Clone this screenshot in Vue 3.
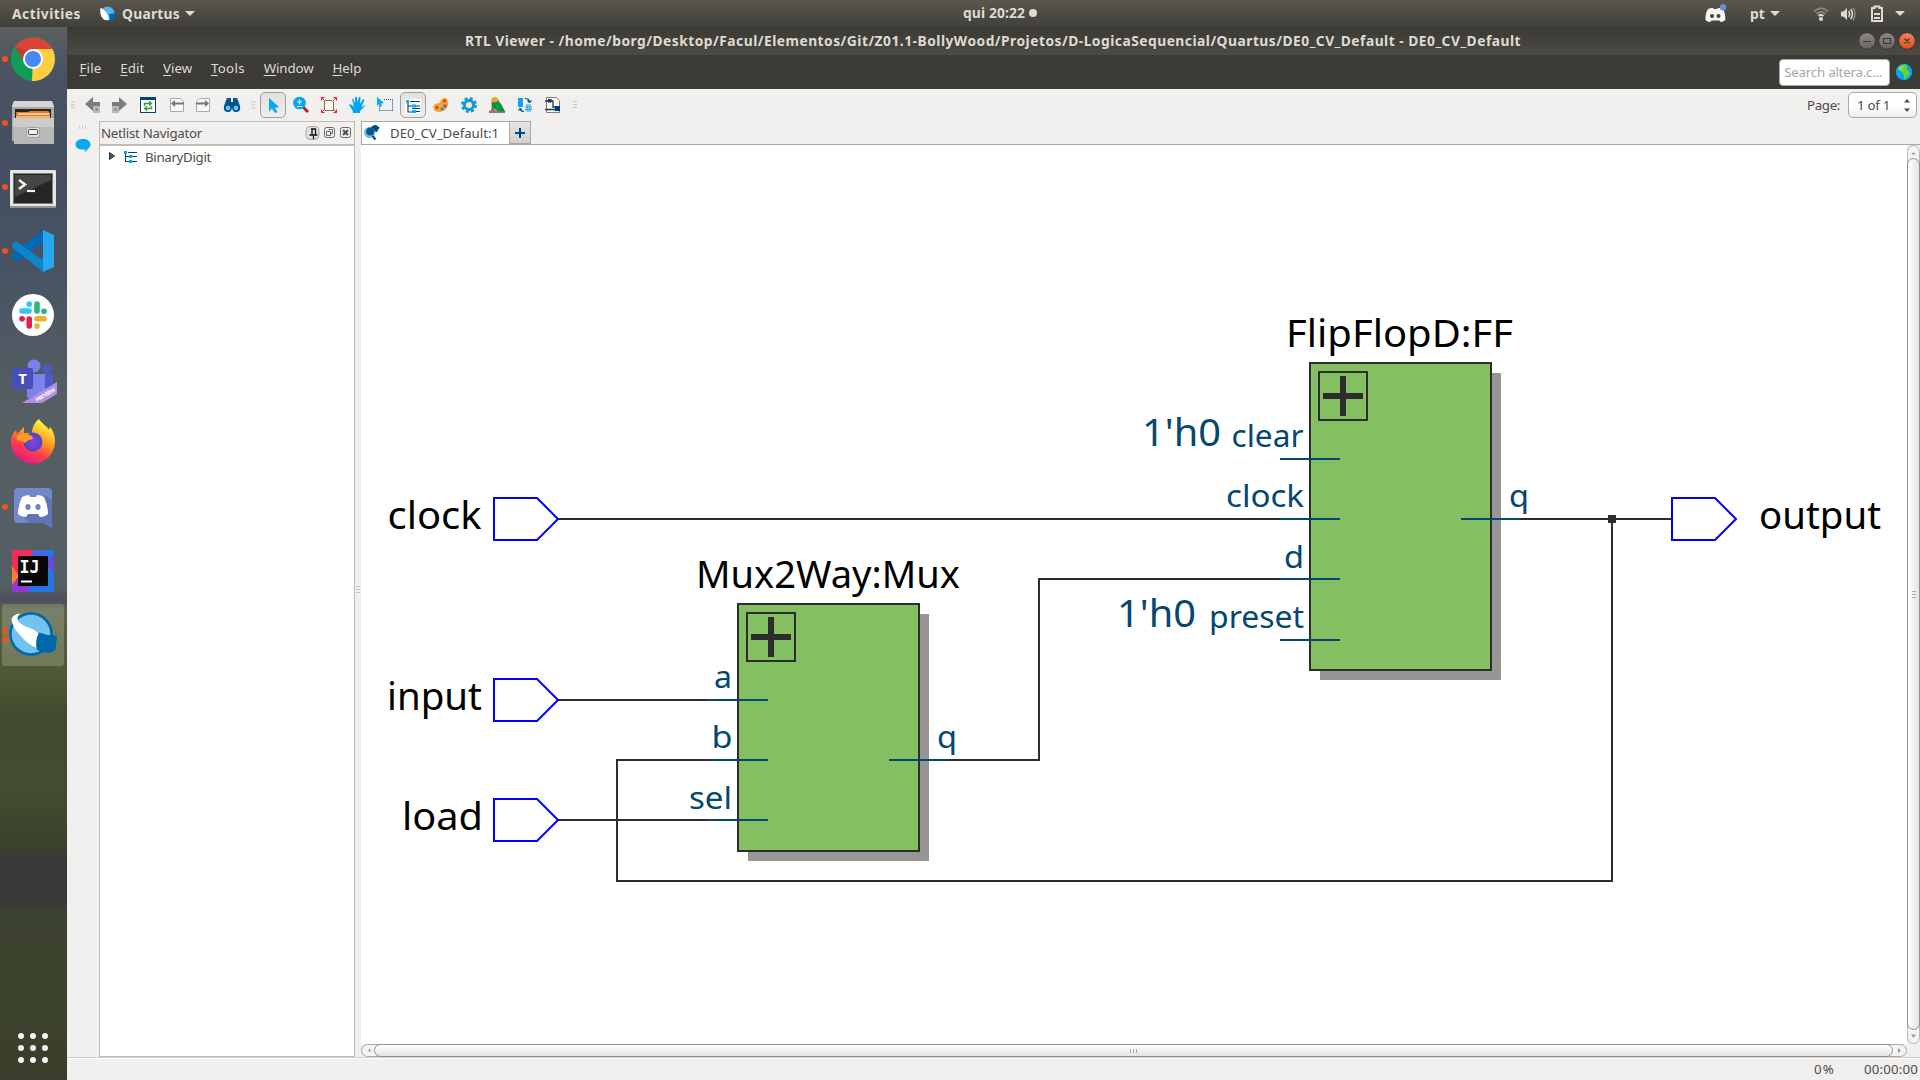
<script setup>
// Spreads a label's letters so that it takes the given width in pixels.
const vFit = {
  mounted(el, { value }) {
    const n = el.textContent.trim().length
    el.style.letterSpacing = (value - el.getBoundingClientRect().width) / n + 'px'
  },
}

const menus = [
  ['File', 22], ['Edit', 24], ['View', 29], ['Tools', 34], ['Window', 50], ['Help', 29],
]

const ports = [
  { label: 'clock', tx: 387.5, tw: 94, x: 494, y: 519 },
  { label: 'input', tx: 387, tw: 95, x: 494, y: 700 },
  { label: 'load', tx: 402, tw: 81, x: 494, y: 820 },
  { label: 'output', tx: 1759, tw: 122, x: 1672, y: 519 },
]

const blocks = [
  { name: 'Mux2Way:Mux', tx: 696, tw: 264, ty: 588, x: 738, y: 604, w: 181, h: 247 },
  { name: 'FlipFlopD:FF', tx: 1286, tw: 227, ty: 347, x: 1310, y: 363, w: 181, h: 307 },
]

const wires = [
  'M558 519H1280', 'M558 700H708', 'M558 820H708',
  'M949 760H1039V579H1280', 'M1521 519H1672', 'M1612 519V881H617V760H708',
]

const pins = [
  [708, 700], [708, 760], [708, 820], [889, 760],
  [1280, 459], [1280, 519], [1280, 579], [1280, 640], [1461, 519],
]

const pinLabels = [
  ['a', 714, 688, 18], ['b', 711.5, 748, 21], ['sel', 689, 808.5, 43], ['q', 937, 748, 20],
  ['clear', 1231.5, 446.5, 72], ['clock', 1226, 507, 78], ['d', 1284, 567.5, 20],
  ['preset', 1209, 627.5, 95], ['q', 1509, 507, 20],
]
const constants = [[1142, 446], [1117, 627]]
const grid = [-12, 0, 12]
</script>

<template>
  <div class="screen">
    <header class="topbar">
      <span class="activities"><b v-fit="69">Activities</b></span>
      <svg class="app-logo" width="17" height="16" viewBox="0 0 17 16">
        <circle cx="7.5" cy="7.5" r="7" fill="#56b4ea" />
        <path d="M.5 2C4 3 9 8 9 14l-4 0C1 12-.5 6 .5 2z" fill="#fff" />
        <path d="M9 8l7-1-1 6-5 2z" fill="#0068ab" />
      </svg>
      <b class="appname" v-fit="58">Quartus</b>
      <i class="caret"></i>
      <div class="clock"><b v-fit="62">qui 20:22</b><i class="dot"></i></div>
      <div class="tray">
        <svg width="24" height="20" viewBox="0 0 24 20">
          <path d="M4 5Q7 3.500 9 4l.6 1h3.500l.9-1q3-.2 5 1 2.500 4 2.300 11-2 2-4.800 2l-1-1.600H7.500L6.400 18Q3 18 1.500 16 1 10 4 5z" fill="#f4f4f4" />
          <circle cx="8" cy="12" r="2" fill="#45443f" /><circle cx="14.500" cy="12" r="2" fill="#45443f" />
          <circle cx="19" cy="3.300" r="3.200" fill="#7289da" />
        </svg>
        <b class="lang" v-fit="15">pt</b>
        <i class="caret"></i>
        <svg class="wifi" width="16" height="16" viewBox="0 0 16 16" fill="none" stroke-width="2">
          <path d="M1 5.500Q8-1 15 5.500M3.500 8Q8 4 12.500 8" stroke="#85837d" />
          <path d="M5.500 10Q8 8 10.500 10" stroke="#dfdbd2" /><circle cx="8" cy="13" r="2" fill="#dfdbd2" />
        </svg>
        <svg class="vol" width="16" height="16" viewBox="0 0 16 16" fill="none" stroke="#dfdbd2" stroke-width="1.500">
          <path d="M1 5.500h2.500L7 2v12L3.500 10.500H1z" fill="#dfdbd2" stroke="none" />
          <path d="M8.700 5q2 3 0 6M10.700 3q3.500 5 0 10" /><path d="M13 1.500q4 6.500 0 13" stroke="#85837d" />
        </svg>
        <svg class="bat" width="14" height="18" viewBox="0 0 14 18" fill="none" stroke="#dfdbd2">
          <path d="M2 3h2.500V1.500h5V3H12v13H2z" stroke-width="2" /><path d="M4 9h6M4 13h6" stroke-width="2" />
        </svg>
        <i class="caret last"></i>
      </div>
    </header>

    <div class="desktop">
      <nav class="dock">
        <!-- Chrome -->
        <svg viewBox="0 0 67 64">
          <circle cx="5" cy="32" r="3" fill="#e95420" />
          <circle cx="33" cy="32" r="22" fill="#109d58" />
          <path d="M33 32L32 54A22 22 0 0 0 52.500 22H33z" fill="#ffce42" />
          <path d="M15 20A22 22 0 0 1 52.500 22H33a10 10 0 0 0-10 11z" fill="#dc4437" />
          <path d="M15 20l8 13 6-9z" fill="#b6372e" opacity=".6" />
          <circle cx="33" cy="32" r="10" fill="#fff" /><circle cx="33" cy="32" r="8" fill="#4688f4" />
        </svg>
        <!-- Files -->
        <svg viewBox="0 0 67 64">
          <circle cx="5" cy="32" r="3" fill="#e95420" />
          <path d="M14 10h38l2 5v35H12V15z" fill="#a9a9a8" /><path d="M14 10h38l2 6H12z" fill="#d5d5d4" />
          <path d="M15 18h36v10H15z" fill="#27231f" />
          <path d="M16 21h12l2-1h18l2 2v6H16z" fill="#e77a22" /><path d="M18 23h31" stroke="#fff" stroke-width="1.200" />
          <path d="M16 26h34" stroke="#f7b567" stroke-width="2" />
          <path d="M13 27h41v26H14z" fill="#b9b9b8" /><path d="M13 27h41v9H13z" fill="#cbcbca" />
          <rect x="26.500" y="36.500" width="13" height="10" rx="2" fill="#ddd" stroke="#a0a0a0" />
          <rect x="28.500" y="38.500" width="9" height="5" rx="1" fill="#f0f0f0" stroke="#444" />
        </svg>
        <!-- Terminal -->
        <svg viewBox="0 0 67 64">
          <circle cx="5" cy="32" r="3" fill="#e95420" />
          <rect x="10" y="15" width="46" height="38" rx="1" fill="#e5e5e3" /><path d="M10 51h46v2H10z" fill="#929290" />
          <rect x="13.500" y="18.500" width="39" height="30" fill="#252525" stroke="#7d7d7b" />
          <path d="M15 20h36v5L15 42z" fill="#454545" />
          <path d="M19 25l6 4.500-6 4.500" fill="none" stroke="#f3f3f3" stroke-width="2.500" /><path d="M27 36h8" stroke="#f3f3f3" stroke-width="2.200" />
        </svg>
        <!-- VS Code -->
        <svg viewBox="0 0 67 64">
          <circle cx="5" cy="32" r="3" fill="#e95420" />
          <path d="M43 11v12L18 42l-3 0-3-4v-2z" fill="#0069b3" />
          <path d="M12 25l4-3L43 41v12L12 28z" fill="#0b86cd" />
          <path d="M43 11l11 5v32l-11 5z" fill="#27a8f2" />
        </svg>
        <!-- Slack -->
        <svg viewBox="0 0 67 64">
          <circle cx="33" cy="32" r="21" fill="#fff" />
          <g stroke-width="5.600" stroke-linecap="round">
            <path d="M22 28h7" stroke="#36c5f0" /><path d="M29.200 21v.2" stroke="#36c5f0" />
            <path d="M37 21v7" stroke="#2eb67d" /><path d="M44 28.200h.1" stroke="#2eb67d" />
            <path d="M37 35.700h7" stroke="#ecb22e" /><path d="M37 43v.1" stroke="#ecb22e" />
            <path d="M29.200 36v7" stroke="#e01e5a" /><path d="M22 35.800h.1" stroke="#e01e5a" />
          </g>
        </svg>
        <!-- Teams -->
        <svg viewBox="0 0 67 64">
          <circle cx="34" cy="19" r="6.500" fill="#7b83eb" /><circle cx="47" cy="22" r="4.500" fill="#5059c9" />
          <path d="M41 27h12v13q-4 10-12 5z" fill="#5059c9" />
          <path d="M26 27h19v19q-8 13-18 4z" fill="#7b83eb" />
          <rect x="12" y="21" width="21" height="21" rx="2" fill="#464eb8" />
          <text x="22.500" y="37" class="glyph" font-size="15" text-anchor="middle">T</text>
          <path d="M57 35v12L42 56H22z" fill="#b08fe0" />
          <text transform="translate(37 55) rotate(-31)" class="glyph" font-size="5.500" textLength="22">PREVIEW</text>
        </svg>
        <!-- Firefox -->
        <svg viewBox="0 0 67 64">
          <defs>
            <linearGradient id="fx" x1=".8" y1="0" x2=".3" y2="1"><stop offset=".1" stop-color="#fff23d" /><stop offset=".45" stop-color="#ff9420" /><stop offset=".7" stop-color="#ff3b4c" /><stop offset="1" stop-color="#e3168a" /></linearGradient>
            <radialGradient id="fp"><stop offset="0" stop-color="#8c3fe8" /><stop offset="1" stop-color="#4d45c0" /></radialGradient>
          </defs>
          <path d="M39 8c3 5 8 7 10 11l1-3c5 6 6 14 4 21A22 22 0 0 1 11 32c0-7 2-10 5-13l1 4 7-7v6l8 0c0-6 3-11 7-14z" fill="url(#fx)" />
          <circle cx="33" cy="31" r="9.500" fill="url(#fp)" />
          <path d="M17 25q7-4 15 0l1 3q-6 1-8 4-4-3-8-3z" fill="#ff9b24" />
        </svg>
        <!-- Discord -->
        <svg viewBox="0 0 67 64">
          <circle cx="5" cy="32" r="3" fill="#e95420" />
          <path d="M18 13h30q4 0 4 4v36l-9-5H18q-4 0-4-4V17q0-4 4-4z" fill="#7289c9" /><path d="M22 41l7 7h14l9 5V25L44 20z" fill="#6075b4" />
          <path d="M22 22q4-2 7-2l1 2h6l1-2q4 0 7 2 4 8 4 17-3 3-8 3l-2-3H28l-2 3q-5 0-8-3 0-9 4-17z" fill="#fff" />
          <ellipse cx="28" cy="32" rx="2.600" ry="2.900" fill="#6d83c4" /><ellipse cx="38" cy="32" rx="2.600" ry="2.900" fill="#6d83c4" />
        </svg>
        <!-- IntelliJ IDEA -->
        <svg viewBox="0 0 67 64">
          <path d="M12 11h42v42H12z" fill="#2474e4" /><path d="M12 11h20l6 14-20 28h-6z" fill="#f72a5c" />
          <path d="M32 11h12l10 14v6H36z" fill="#3b6ce4" /><path d="M12 27l7 10-7 9z" fill="#f98026" /><path d="M12 46l7-7 12 14H12z" fill="#9038cf" /><path d="M54 15v18l-8-8z" fill="#6747dc" />
          <path d="M18 17h30v30H18z" fill="#080808" />
          <text x="19.500" y="33.500" class="mono" font-size="17" textLength="20" lengthAdjust="spacingAndGlyphs">IJ</text><path d="M21 42.500h11" stroke="#fff" stroke-width="2" />
        </svg>
        <!-- Quartus -->
        <svg viewBox="0 0 67 64">
          <rect x="2" y="1" width="62" height="62" rx="3" fill="#fff" opacity=".19" />
          <circle cx="5" cy="28" r="3" fill="#e95420" /><circle cx="5" cy="36.500" r="3" fill="#e95420" />
          <circle cx="31" cy="31" r="20.500" fill="#74c3ee" stroke="#0068a8" stroke-width="2.500" />
          <path d="M21 10.500Q15 14 19 19Q23 23 30 25Q36 27 39 31L37 45Q28 42 20 32Q13 25 11.500 17Q12 11 21 10.500z" fill="#fff" />
          <path d="M39 29.500Q48 33 57 32.500L55.500 47L50 50Q43 50 37 47Q34.500 38 39 29.500z" fill="#0068a8" />
        </svg>
        <svg class="apps" viewBox="0 0 67 64">
          <template v-for="dy in grid" :key="dy"><circle v-for="dx in grid" :key="dx" :cx="33 + dx" :cy="32 + dy" r="3" fill="#f3f3f2" /></template>
        </svg>
      </nav>

      <main class="window">
        <div class="titlebar">
          <b v-fit="1056">RTL Viewer - /home/borg/Desktop/Facul/Elementos/Git/Z01.1-BollyWood/Projetos/D-LogicaSequencial/Quartus/DE0_CV_Default - DE0_CV_Default</b>
          <svg class="winbtns" width="60" height="20" viewBox="0 0 60 20">
            <defs>
              <linearGradient id="gb" x2="0" y2="1"><stop stop-color="#8d8b83" /><stop offset="1" stop-color="#66645d" /></linearGradient>
              <linearGradient id="ob" x2="0" y2="1"><stop stop-color="#f38363" /><stop offset="1" stop-color="#e14c1c" /></linearGradient>
            </defs>
            <g stroke="#33322e" stroke-width=".8"><circle cx="10" cy="10" r="8.300" fill="url(#gb)" /><circle cx="30" cy="10" r="8.300" fill="url(#gb)" /><circle cx="50" cy="10" r="8.300" fill="url(#ob)" /></g>
            <path d="M6 10.500h8M26.500 7.500h7v5h-7zM47.500 7.500l5 5M52.500 7.500l-5 5" fill="none" stroke="#3a3934" stroke-width="1.200" />
          </svg>
        </div>

        <div class="menubar">
          <span v-for="[m, w] in menus" :key="m" v-fit="w" class="menu"><u>{{ m[0] }}</u>{{ m.slice(1) }}</span>
          <div class="search"><span v-fit="98">Search altera.c...</span></div>
          <svg width="18" height="18" viewBox="0 0 18 18">
            <circle cx="9" cy="9" r="8.200" fill="#05a5f4" />
            <path d="M5 3l5-2 2 2 1 1-2 2 2 1 2 3-2 3-3 4-1-3-1-4-3-3z" fill="#63d333" /><path d="M3 5l3-2 4 1-3 2 1 3-4-2z" fill="#8ae33c" />
          </svg>
        </div>

        <div class="toolbar">
          <svg class="w13" viewBox="-6.500 -16 13 32"><path d="M-2.500-3h4M-2.500 0h4M-2.500 3h4" stroke="#c5c3c0" /></svg>
          <svg class="w26" viewBox="-13 -16 26 32"><path d="M-8-1L0-8v5h7V1H0v5z" fill="#7c7c7c" /><path d="M0 1h7v7H0z" fill="#b8b8b8" /><path d="M2.500 3.500h2v2h-2z" fill="#777" /></svg>
          <svg class="w26" viewBox="-13 -16 26 32"><path d="M8-1L0-8v5h-7V1h7v5z" fill="#7c7c7c" /><path d="M-7 1h7v7h-7z" fill="#b8b8b8" /><path d="M-4.500 3.500h2v2h-2z" fill="#777" /></svg>
          <svg class="w32" viewBox="-16 -16 32 32"><path d="M-8-8H8V8H-8z" fill="#00457c" /><path d="M-7-5H7V7H-7z" fill="#fff" /><path d="M-3.500 1v-2.500H2.500M3.500 1v2.500H-2.500" fill="none" stroke="#3e9c3a" stroke-width="1.500" /><path d="M1-4.500l3.500 3L1 1.500zM-1 .5l-3.500 3L-1 6.500z" fill="#3e9c3a" /></svg>
          <svg class="w26" viewBox="-13 -16 26 32"><path d="M-6.500-6.500h10l3 3v10h-13z" fill="#f8f8f8" stroke="#aaa" /><path d="M7-1.500H-3" stroke="#777" stroke-width="2" /><path d="M-6-1.500l4-3.500v7z" fill="#777" /></svg>
          <svg class="w26" viewBox="-13 -16 26 32"><path d="M6.500-6.500h-10l-3 3v10h13z" fill="#f8f8f8" stroke="#aaa" /><path d="M-7-1.500H3" stroke="#777" stroke-width="2" /><path d="M6-1.500l-4-3.500v7z" fill="#777" /></svg>
          <svg class="w32" viewBox="-16 -16 32 32"><path d="M-5-7h4v4h2v-4h4l3 8q1 6-4 6-4 0-4-5 0 5-4 5-5 0-4-6z" fill="#00568f" /><circle cx="-4" cy="3" r="2.200" fill="#77c6f2" /><circle cx="4" cy="3" r="2.200" fill="#77c6f2" /></svg>
          <svg class="w11" viewBox="-5.500 -16 11 32"><path d="M-2-3h4M-2 0h4M-2 3h4" stroke="#c5c3c0" /></svg>
          <div class="pressed"><svg viewBox="-14 -16 28 32"><path d="M-4-7L6 2 2 3l2.500 4-2.500 1-3-4.500-3 3z" fill="#05a9f7" /></svg></div>
          <svg class="w28" viewBox="-14 -16 28 32"><path d="M2 2l5 5" stroke="#ad1f22" stroke-width="2.800" /><circle cx="-1.500" cy="-2" r="6.300" fill="#05a3f0" /><path d="M-4-3h5M-1.500-5.500v5M-4 1.500h5" stroke="#fff" stroke-width="1.200" /></svg>
          <svg class="w28" viewBox="-14 -16 28 32"><path d="M-4.500-4.500H3L4.500-3v8.500h-9z" fill="#fff9df" stroke="#866e63" /><path d="M-7.500-4.500v-3h3M-7.500-7.500l3 3M7.500-4.500v-3h-3M7.500-7.500l-3 3M-7.500 4.500v3h3M-7.500 7.500l3-3M7.500 4.500v3h-3M7.500 7.500l-3-3" fill="none" stroke="#ed1c24" /></svg>
          <svg class="w28" viewBox="-14 -16 28 32"><path d="M-4 8C-4 4-7 3-8-1l3 1 2 2-2-8 1-.5 2 5V-8h2v6l2-6h1.500L3-1l3-5 1.500.5-3 8L8 0v1L3 6v2z" fill="#05a3f0" /></svg>
          <svg class="w28" viewBox="-14 -16 28 32"><path d="M-1-5.500H7.500M7.500-5.500v11M7.500 5.500h-13M-5.500 5.500V0" fill="none" stroke="#0b4e86" stroke-dasharray="1 1" /><path d="M-8-8L-1-2l-3 .5L-3 1-5 2-6-1l-2 2z" fill="#05a9f7" /></svg>
          <div class="pressed"><svg viewBox="-14 -16 28 32"><path d="M-8-6H8V9H-8z" fill="#fff" /><path d="M-5-2v9h4M-5 1h4M-3-3.500h10M3 1h4M3 6.500h4M-1 3.500h8" fill="none" stroke="#00457c" stroke-width="1.200" /><path d="M-7-5h3v3h-3zM-1-.5h4v3h-4zM-1 5h4v3h-4z" fill="#05a9f7" /></svg></div>
          <svg class="w28" viewBox="-14 -16 28 32"><path d="M0-5C2-8 7-8 7-3 8 3 3 7-2 7-7 7-9 3-7 0-5-3-1 0 0-5z" fill="#f6a72b" /><circle cx="3.500" cy="-4" r="1.700" fill="#ed3b3b" /><circle cx="4" cy="1" r="1.700" fill="#8e4dc4" /><circle cx="-4" cy="2.500" r="1.700" fill="#ed3b3b" /><circle cx="1" cy="4" r="1.600" fill="#1a8ddd" /></svg>
          <svg class="w28" viewBox="-14 -16 28 32"><circle r="6.500" fill="none" stroke="#0b98e0" stroke-width="3" stroke-dasharray="2.800 2.305" /><circle r="4.600" fill="#fbe4b4" stroke="#0b98e0" stroke-width="3" /></svg>
          <svg class="w28" viewBox="-14 -16 28 32"><path d="M-8 5.500H8V8H-8z" fill="#94776d" /><path d="M-5-1l-1 7h4z" fill="#a5683a" /><path d="M-5-4L1-6Q2-3 4-1L8 6.500H3Q-6 5-5.500-3z" fill="#0b8f43" /><path d="M-1-1q3 1 5 5-5-1-5-5z" fill="#14b04f" /><path d="M-6-5Q-5-8-2-8 1-8 1.500-4L-2-2.500-5-3z" fill="#f3a42b" /></svg>
          <svg class="w28" viewBox="-14 -16 28 32"><path d="M-7-7h5v9h-5z" fill="#05a9f7" /><path d="M1-1h5v8H1z" fill="#7acbf1" /><path d="M0-6.500q4 0 4.500 3M2.500-4.500l2 2 2-2M-1 6.500q-3 0-4-2.500M-6.500 5.500l1.500-2 2 1.500" fill="none" stroke="#0b4e86" stroke-width="1.100" /><path d="M0 2h7.500M0 4.500h7.500" stroke="#0b4e86" stroke-width=".8" stroke-dasharray="1 1" /></svg>
          <svg class="w28" viewBox="-14 -16 28 32"><path d="M-6.500-7.500h10l3 3v12h-13z" fill="#fff9e6" stroke="#94776d" /><path d="M-8-4h8v6h4M-8 4.500h10" fill="none" stroke="#003c70" stroke-width="1.300" /><path d="M-5-6h3.500v3.500H-5zM2 1h5v5H2z" fill="#003c70" /></svg>
          <svg class="w16" viewBox="-8 -16 16 32"><path d="M-2-3.500h4M-2-.5h4M-2 2.500h4" stroke="#c5c3c0" /></svg>
          <span class="page" v-fit="33">Page:</span>
          <div class="spin"><span v-fit="33">1 of 1</span><svg width="8" height="14" viewBox="0 0 8 14"><path d="M1 4.500l3-3.500 3 3.500zM1 10.500h6L4 14z" fill="#4c4c4c" /></svg></div>
        </div>

        <div class="work">
          <aside class="strip">
            <svg width="32" height="36" viewBox="0 0 32 36"><path d="M12.500 4v4M15.500 4v4M18.500 4v4" stroke="#cfcdca" /><path d="M16 18c4 0 7.500 2 7.500 5.500 0 2-1 3-2.500 4q-1 3-4 3l1.500-2C12 29 8.500 27 8.500 23.500S12 18 16 18z" fill="#05a9f7" /></svg>
          </aside>
          <section class="nav">
            <div class="navhead">
              <span v-fit="101">Netlist Navigator</span>
              <svg width="49" height="16" viewBox="0 0 49 16" fill="none">
                <rect x="1" y="1.500" width="13" height="13" rx="4" fill="#e3e1df" stroke="#a8a6a3" /><path d="M6 4h5M7 4v6M10.500 4v6M4.500 10h8M8.500 10v4" stroke="#111" stroke-width="1.300" />
                <g stroke="#696969"><rect x="19.500" y="2.500" width="10" height="10" rx="2" /><path d="M23.500 4.500h4v4h-2M21.500 6.500h4v4h-4z" /><rect x="35.500" y="2.500" width="10" height="10" rx="2" /></g>
                <path d="M38 5l5 5M43 5l-5 5" stroke="#555" stroke-width="2.200" />
              </svg>
            </div>
            <div class="tree">
              <svg width="37" height="16" viewBox="0 0 37 16"><path d="M1.500 3.500v7l5-3.500z" fill="#555" stroke="#333" /><path d="M17.500 4v8.500h4M17.500 7.500h4M20 3.500h9M24 7.500h5M24 12.500h5" fill="none" stroke="#00457c" stroke-width="1.100" /><path d="M16 2h3v3h-3zM21 6h3v3h-3zM21 11h3v3h-3z" fill="#05a3f0" /></svg>
              <span v-fit="66">BinaryDigit</span>
            </div>
          </section>
          <div class="splitter"><i></i></div>
          <section class="view">
            <div class="tabs">
              <div class="tab">
                <svg width="18" height="18" viewBox="0 0 18 18"><path d="M8 3.500Q9 1 13 1l3.500 2.500L14 8l-4-1z" fill="#00457c" /><circle cx="6.500" cy="8.500" r="5.500" fill="#69bfec" /><circle cx="7.300" cy="7.500" r="4" fill="#07568f" /><path d="M9.500 12l3 3.500" stroke="#00457c" stroke-width="2" /></svg>
                <span v-fit="109">DE0_CV_Default:1</span>
              </div>
              <div class="add"><svg width="10" height="10" viewBox="0 0 10 10"><path d="M5 0v10M0 5h10" stroke="#00457c" stroke-width="2" /></svg></div>
            </div>
            <div class="canvasrow">
              <svg class="schematic" viewBox="361 145 1546 899">
                <g fill="none" stroke="#2d2d2d" stroke-width="2"><path v-for="d in wires" :key="d" :d="d" /></g>
                <rect x="1608" y="515" width="8" height="8" fill="#2d2d2d" />
                <g v-for="b in blocks" :key="b.name">
                  <rect :x="b.x + 10" :y="b.y + 10" :width="b.w" :height="b.h" fill="#969696" />
                  <rect :x="b.x" :y="b.y" :width="b.w" :height="b.h" fill="#84c061" stroke="#2d2d2d" stroke-width="2" />
                  <rect :x="b.x + 9" :y="b.y + 9" width="48" height="48" fill="none" stroke="#2d2d2d" stroke-width="2" />
                  <path :d="`M${b.x + 13} ${b.y + 33}h40M${b.x + 33} ${b.y + 13}v40`" stroke="#2d2d2d" stroke-width="6" />
                  <text :x="b.tx" :y="b.ty" :textLength="b.tw" lengthAdjust="spacingAndGlyphs" font-size="38.500">{{ b.name }}</text>
                </g>
                <g v-for="p in ports" :key="p.label">
                  <path :d="`M${p.x} ${p.y - 21}h43l21 21l-21 21h-43z`" fill="none" stroke="#00f" stroke-width="2" />
                  <text :x="p.tx" :y="p.y + 9.5" :textLength="p.tw" lengthAdjust="spacingAndGlyphs" font-size="38.500">{{ p.label }}</text>
                </g>
                <g fill="#04476f">
                  <path v-for="[x, y] in pins" :key="x + '-' + y" :d="`M${x} ${y}h60`" stroke="#04476f" stroke-width="2" />
                  <text v-for="([t, x, y, w], i) in pinLabels" :key="i" :x="x" :y="y" :textLength="w" lengthAdjust="spacingAndGlyphs" font-size="31">{{ t }}</text>
                  <text v-for="[x, y] in constants" :key="y" :x="x" :y="y" textLength="79" lengthAdjust="spacingAndGlyphs" font-size="38.500">1'h0</text>
                </g>
              </svg>
              <div class="vscroll">
                <svg width="11" height="12" viewBox="0 0 11 12"><path d="M3.500 8.500l2-2.500 2 2.500z" fill="#9a9a9a" /></svg>
                <div class="vthumb"><i></i></div>
                <svg width="11" height="13" viewBox="0 0 11 13"><path d="M3 4.500h5L5.500 8z" fill="#9a9a9a" /></svg>
              </div>
            </div>
            <div class="hscroll">
              <svg width="12" height="11" viewBox="0 0 12 11"><path d="M8.500 3.500v4L6 5.500z" fill="#9a9a9a" /></svg>
              <div class="hthumb"><i></i></div>
              <svg width="13" height="11" viewBox="0 0 13 11"><path d="M5 3v5l3-2.500z" fill="#9a9a9a" /></svg>
            </div>
          </section>
        </div>

        <footer class="status"><span v-fit="21">0%</span><span v-fit="54">00:00:00</span></footer>
      </main>
    </div>
  </div>
</template>

<style>
body { margin: 0; overflow: hidden; }
</style>

<style scoped>
* { box-sizing: border-box; }
svg { display: block; flex: none; }
span, b { white-space: nowrap; flex: none; display: inline-block; }
.screen { width: 1920px; height: 1080px; display: flex; flex-direction: column; font: 13.3px/18px "Noto Sans", "Open Sans", sans-serif; color: #4c4c4c; overflow: hidden; }
.topbar { height: 27px; flex: none; display: flex; align-items: center; background: linear-gradient(#5a574e, #403f3a); color: #dfdbd2; font-size: 13.8px; position: relative; }
.activities { margin-left: 12px; width: 88px; }
.app-logo { margin-right: 5px; }
.caret { border: 5px solid transparent; border-top-color: #dfdbd2; border-bottom: 0; margin-left: 5px; flex: none; }
.clock { position: absolute; left: 963px; top: 4px; display: flex; align-items: center; }
.dot { width: 8px; height: 8px; border-radius: 50%; background: #dfdbd2; margin-left: 4px; }
.tray { margin-left: auto; display: flex; align-items: center; padding-right: 15px; }
.lang { margin-left: 22px; }
.wifi { margin-left: 33px; }
.vol { margin-left: 11px; }
.bat { margin-left: 14px; }
.caret.last { margin-left: 11px; }
.desktop { flex: 1; min-height: 0; display: flex; }
.dock { width: 67px; flex: none; display: flex; flex-direction: column; background: linear-gradient(#5d6061, #4a5362 45px, #434e60 150px, #4a5563 260px, #555e63 380px, #555e62 560px, #4b505b 572px, #5a6342 584px, #4f5835 645px, #414a2c 690px, #444d2f 760px, #3a422c 815px, #3a3838 832px, #393739 875px, #3c4230 885px, #3c432d 980px, #393d2b); }
.dock svg { width: 67px; height: 64px; }
.glyph { fill: #fff; font-family: "Noto Sans", sans-serif; font-weight: 700; }
.mono { fill: #fff; font-family: "DejaVu Sans Mono", monospace; font-weight: 700; }
.dock .apps { margin-top: 349px; }
.window { flex: 1; min-width: 0; display: flex; flex-direction: column; background: #f1f0ee; }
.titlebar { height: 28px; flex: none; background: linear-gradient(#3a3935, #4b4a43); color: #dfdbd2; display: flex; align-items: center; padding: 0 3px 1px 398px; font-size: 13.8px; }
.winbtns { margin-left: auto; }
.menubar { height: 34px; flex: none; background: #3c3b37; display: flex; align-items: center; gap: 18.8px; padding: 0 7px 0 12.500px; color: #dfdbd2; }
.menu { padding-bottom: 8px; }
.menu u { text-underline-offset: 2px; text-decoration-thickness: 1px; }
.search { margin: 0 -13px 0 auto; width: 111px; height: 27px; background: #fff; border: 1px solid #aaa69f; border-radius: 4px; color: #a6a6a6; padding: 3px 0 0 4px; position: relative; left: 1px; }
.toolbar { height: 32px; flex: none; display: flex; align-items: center; padding-right: 3px; }
.toolbar > svg, .pressed svg { height: 32px; }
.w13 { width: 13px; } .w26 { width: 26px; } .w32 { width: 32px; } .w11 { width: 11px; } .w28 { width: 28px; } .w16 { width: 16px; }
.pressed { width: 26px; height: 26px; margin: 0 1px; flex: none; border: 1px solid #a19f9c; border-radius: 5px; background: linear-gradient(#e2e1df, #efeeec); display: flex; align-items: center; justify-content: center; }
.pressed svg { width: 28px; }
.page { margin-left: auto; margin-right: 8px; }
.spin { width: 69px; height: 26px; border: 1px solid #a9a7a3; border-radius: 5px; background: linear-gradient(#fff, #fff 55%, #ececea); display: flex; align-items: center; justify-content: space-between; padding: 0 5px 0 8px; }
.work { flex: 1; min-height: 0; display: flex; }
.strip { width: 32px; flex: none; }
.nav { width: 256px; flex: none; border: 1px solid #bfbcb8; background: #fff; display: flex; flex-direction: column; }
.navhead { height: 24px; background: #f1f0ee; border-bottom: 2px solid #bfbcb8; display: flex; justify-content: space-between; align-items: center; padding-left: 1px; }
.tree { display: flex; align-items: center; height: 22px; padding-left: 8px; }
.splitter { width: 6px; flex: none; display: flex; align-items: center; justify-content: center; }
.splitter i { width: 4px; height: 7px; background: repeating-linear-gradient(#c5c3c0 0 1px, transparent 1px 3px); }
.view { flex: 1; min-width: 0; display: flex; flex-direction: column; }
.tabs { height: 24px; flex: none; display: flex; border-bottom: 1px solid #aaa8a5; }
.tab { width: 149px; height: 24px; background: #fff; border: 1px solid #aaa8a5; display: flex; align-items: center; gap: 9px; padding-left: 1px; }
.add { width: 21px; height: 23px; border: 1px solid #aaa8a5; border-left: 0; background: linear-gradient(#e8e6e4, #d2cfcc); display: flex; align-items: center; justify-content: center; }
.canvasrow { flex: 1; min-height: 0; display: flex; }
.schematic { width: 1546px; height: 899px; background: #fff; font-family: "Noto Sans", sans-serif; }
.vscroll { width: 13px; flex: none; border: 1px solid #bbb9b6; border-radius: 7px; background: #f3f3f1; display: flex; flex-direction: column; }
.vthumb { flex: 1; margin: 0 -1px; border: 1px solid #94918d; border-radius: 7px; background: linear-gradient(90deg, #fff, #e5e4e2); display: flex; align-items: center; justify-content: center; }
.vthumb i { width: 4px; height: 7px; background: repeating-linear-gradient(#aaa 0 1px, transparent 1px 3px); }
.hscroll { height: 13px; width: 1546px; flex: none; border: 1px solid #aaa8a5; border-radius: 7px; background: #f3f3f1; display: flex; }
.hthumb { flex: 1; margin: -1px 0; border: 1px solid #94918d; border-radius: 7px; background: linear-gradient(#fff, #e5e4e2); display: flex; align-items: center; justify-content: center; }
.hthumb i { width: 7px; height: 4px; background: repeating-linear-gradient(90deg, #aaa 0 1px, transparent 1px 3px); }
.status { height: 23px; flex: none; border-top: 1px solid #d2d0cd; box-shadow: inset 0 1px #fff; display: flex; justify-content: flex-end; align-items: center; gap: 29px; padding: 0 2px 0 0; }
</style>
